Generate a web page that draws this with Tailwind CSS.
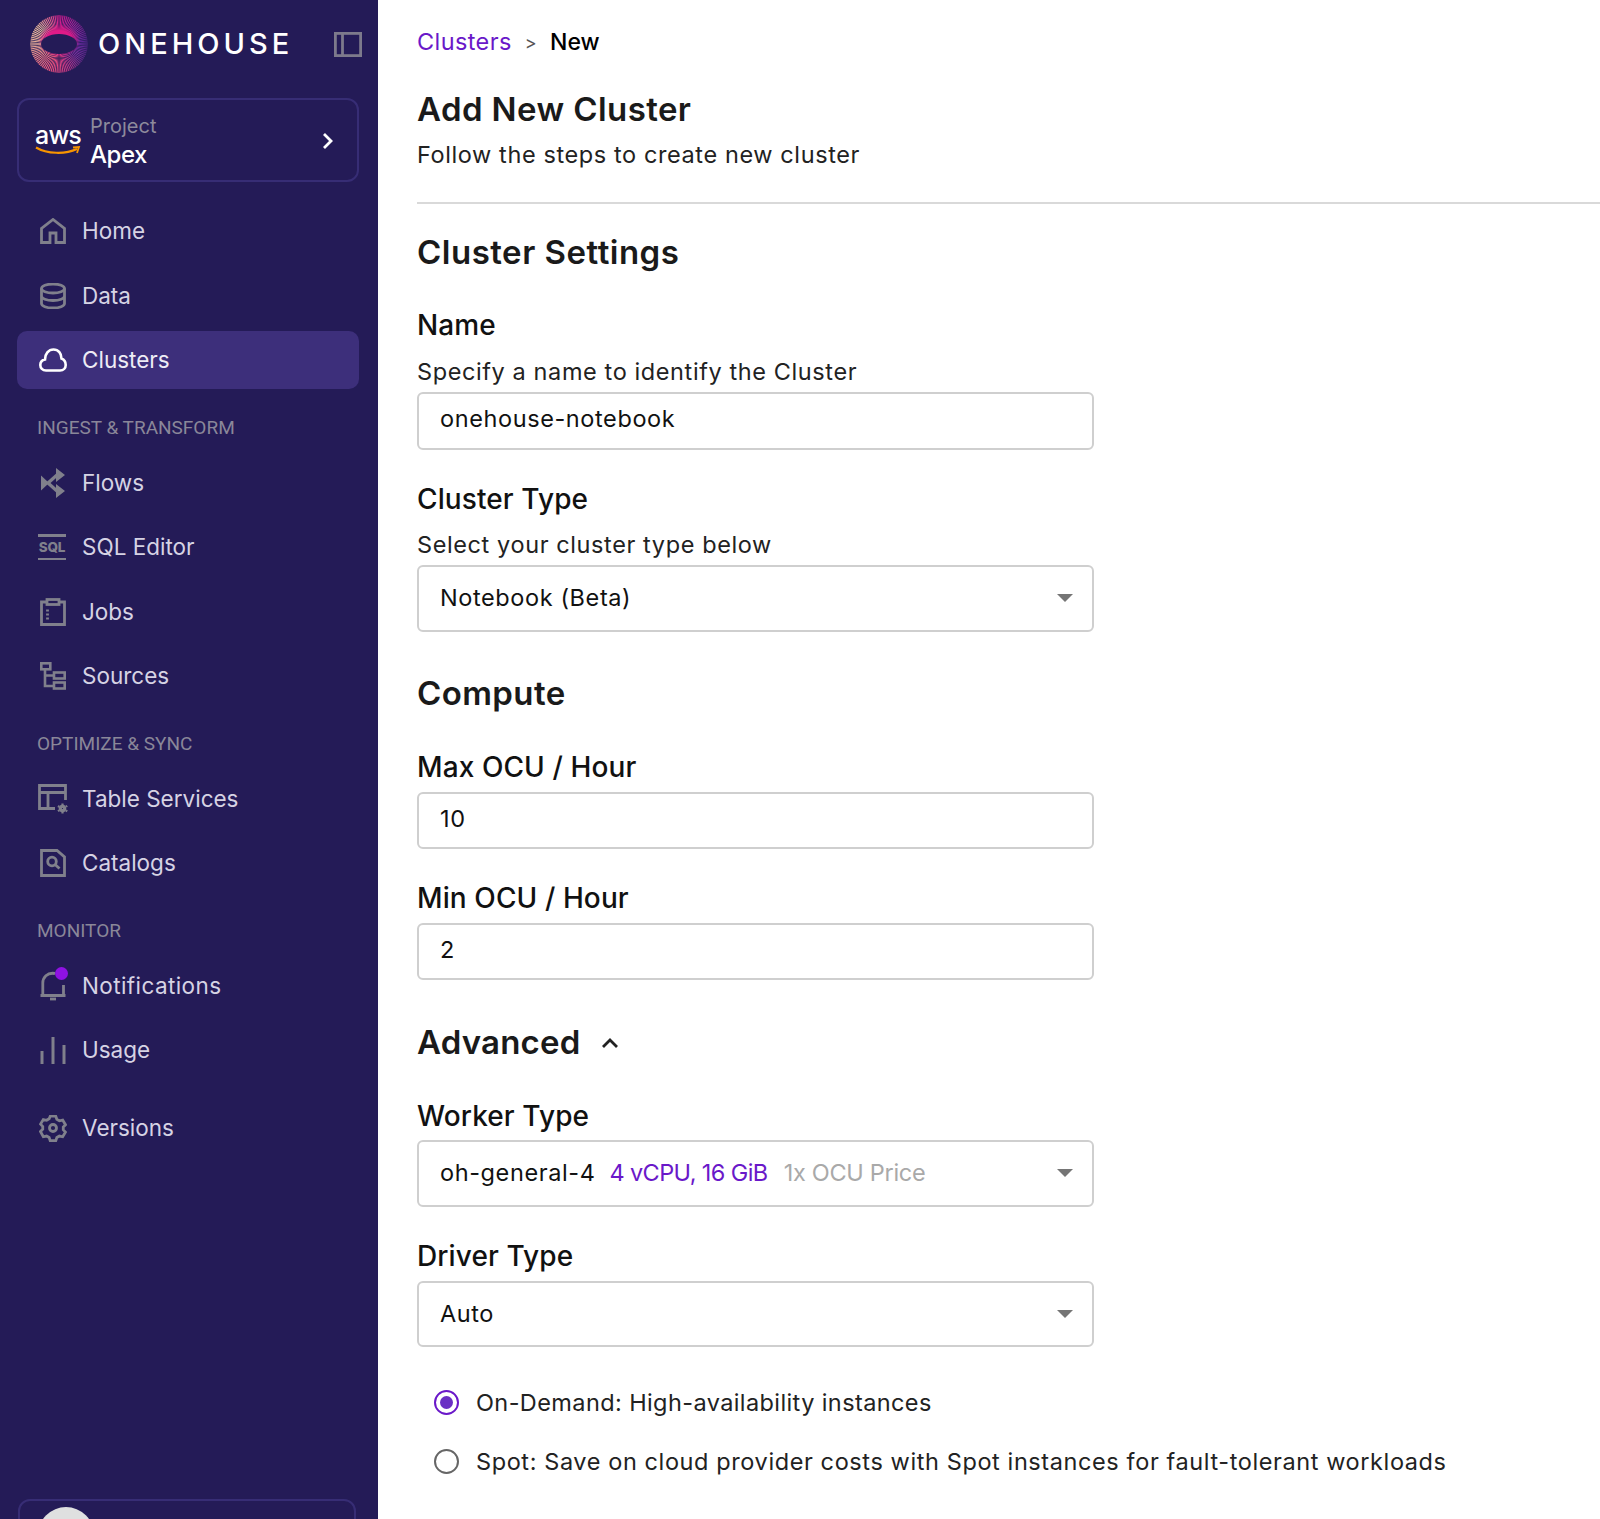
<!DOCTYPE html>
<html>
<head>
<meta charset="utf-8">
<script src="https://cdn.jsdelivr.net/npm/@tailwindcss/browser@4"></script>
</head>
<body class="bg-white font-['Inter',sans-serif] overflow-hidden">
<div class="flex h-[1519px] w-[1600px] overflow-hidden">
  <aside class="relative w-[378px] shrink-0 bg-[#241b57] pl-[17px] pr-[19px] text-[22.500px] text-[#d6d3e4]">
    <div class="flex h-[88px] items-center">
      <div class="relative ml-[13px] size-[58px] shrink-0">
        <div class="absolute inset-0 rounded-full bg-[conic-gradient(#d81b8f_0deg,#a4259f_40deg,#6a2ba6_85deg,#7a2f9c_125deg,#d33a86_165deg,#f2557f_200deg,#ef7d86_235deg,#ecb09a_270deg,#eebf9e_310deg,#e0608f_340deg,#d81b8f_360deg)] [mask-image:repeating-conic-gradient(#000_0deg,#0003_2deg,#000_4deg)]"></div>
        <div class="absolute inset-0 rounded-full bg-[radial-gradient(circle_at_36%_50%,#241b5700_62%,#241b57b0_88%)]"></div>
        <div class="absolute left-[8px] top-[9px] h-[33px] w-[42px] rounded-full bg-[radial-gradient(closest-side,#e01a88_60%,#e01a8800_100%)]"></div>
        <div class="absolute left-[11px] top-[19px] h-[20px] w-[36px] rounded-[50%] bg-[#241b57]"></div>
      </div>
      <span class="ml-[10px] text-[29px] font-medium tracking-[4px] text-white">ONEHOUSE</span>
      <svg class="ml-auto mr-[-3px] shrink-0" width="28" height="25" viewBox="0 0 28 25" fill="none" stroke="#7d7a8c" stroke-width="2.800"><rect x="1.400" y="1.400" width="25.200" height="22.200"/><path d="M8.500 1v23"/></svg>
    </div>
    <div class="mt-[10px] flex h-[84px] items-center rounded-[12px] border-2 border-[#372d75] pl-[16px] pr-[23px]">
      <div class="flex w-[46px] shrink-0 flex-col items-center">
        <span class="text-[25px] font-medium leading-[22px] tracking-[-0.03em] text-white">aws</span>
        <svg width="46" height="10" viewBox="0 0 46 10" fill="none"><path d="M1 1.500C12 8 30 8.500 42 3" stroke="#f79400" stroke-width="2.200"/><path d="M38 1.500L44 1 42 7" stroke="#f79400" stroke-width="1.800"/></svg>
      </div>
      <div class="ml-[9px] flex flex-col pt-[2px]">
        <span class="text-[20px] leading-[28px] text-[#8d8a9c]">Project</span>
        <span class="text-[24px] font-medium leading-[30px] tracking-[-0.02em] text-white">Apex</span>
      </div>
      <svg class="ml-auto mt-[2px]" width="12" height="18" viewBox="0 0 12 18" fill="none" stroke="#fff" stroke-width="2.800"><path d="M2 2l7 7-7 7"/></svg>
    </div>

    <nav class="mt-[17px]">
      <div class="flex h-[64.500px] items-center pl-[23px]">
        <svg class="shrink-0" width="26" height="26" viewBox="0 0 26 26" fill="none" stroke="#80808c" stroke-width="2.800"><path d="M1.500 24.500V10.500L13 1.500 24.500 10.500V24.500H16V15H10V24.500Z"/></svg>
        <span class="ml-[16px]">Home</span>
      </div>
      <div class="flex h-[64.500px] items-center pl-[23px]">
        <svg class="shrink-0" width="26" height="26" viewBox="0 0 26 26" fill="none" stroke="#80808c" stroke-width="2.800"><ellipse cx="13" cy="5.500" rx="11.500" ry="4.500"/><path d="M1.500 5.500v15c0 2.500 5 4.500 11.500 4.500s11.500-2 11.500-4.500v-15M1.500 13c0 2.500 5 4.500 11.500 4.500S24.500 15.500 24.500 13"/></svg>
        <span class="ml-[16px]">Data</span>
      </div>
      <div class="mt-[3px] flex h-[58px] items-center rounded-[10px] bg-[#3d2f7b] pl-[22px] text-[#eeecf5]">
        <svg class="shrink-0" width="28" height="24" viewBox="0 0 28 24" fill="none" stroke="#fff" stroke-width="2.600"><path d="M7 22.500C3.500 22.500 1.300 20 1.300 17 1.300 14 3.500 12 6 11.500 6 6 9.500 1.500 14.500 1.500 19.500 1.500 22.500 5.500 22.500 10.500 25 11.500 26.700 14 26.700 17 26.700 20 24.500 22.500 21 22.500Z"/></svg>
        <span class="ml-[15px]">Clusters</span>
      </div>

      <div class="mt-[22.500px] flex h-[33px] items-center pl-[20px] font-['Roboto',sans-serif] text-[19px] text-[#8a8799]">INGEST &amp; TRANSFORM</div>

      <div class="mt-[6px]">
        <div class="flex h-[64.500px] items-center pl-[23px]">
          <svg class="shrink-0" width="26" height="30" viewBox="0 0 26 30" fill="#80808c"><path d="M1 7.500l8 7.500-8 7.500z"/><path d="M8 15l9-8" stroke="#80808c" stroke-width="3.200"/><path d="M8 15l9 8" stroke="#80808c" stroke-width="3.200"/><path d="M16 0v14l9-7zM16 16v14l9-7z"/></svg>
          <span class="ml-[16px]">Flows</span>
        </div>
        <div class="flex h-[64.500px] items-center pl-[21px]">
          <div class="flex h-[26px] w-[28px] shrink-0 flex-col justify-between">
            <div class="h-[2.500px] bg-[#80808c]"></div>
            <div class="text-center text-[13.500px] font-extrabold leading-[14px] tracking-[-0.02em] text-[#80808c]">SQL</div>
            <div class="h-[2.500px] bg-[#80808c]"></div>
          </div>
          <span class="ml-[16px]">SQL Editor</span>
        </div>
        <div class="flex h-[64.500px] items-center pl-[23px]">
          <svg class="shrink-0" width="26" height="28" viewBox="0 0 26 28" fill="none" stroke="#80808c" stroke-width="2.800"><path d="M7 4H1.500V26.500H24.500V4H19"/><rect x="7" y="1.500" width="12" height="5"/><path d="M7.500 11.500v2M7.500 15.500v2M7.500 19.500v2"/></svg>
          <span class="ml-[16px]">Jobs</span>
        </div>
        <div class="flex h-[64.500px] items-center pl-[23px]">
          <svg class="shrink-0" width="26" height="28" viewBox="0 0 26 28" fill="none" stroke="#80808c" stroke-width="2.600"><rect x="1.300" y="1.300" width="9" height="6"/><rect x="14" y="10.500" width="10.700" height="6"/><rect x="14" y="20.500" width="10.700" height="6"/><path d="M5 7v17h9M5 13.500h9"/></svg>
          <span class="ml-[16px]">Sources</span>
        </div>
      </div>

      <div class="mt-[18px] flex h-[33px] items-center pl-[20px] pt-[2px] font-['Roboto',sans-serif] text-[19px] text-[#8a8799]">OPTIMIZE &amp; SYNC</div>

      <div class="mt-[7px]">
        <div class="flex h-[64.500px] items-center pl-[21px]">
          <svg class="shrink-0" width="30" height="30" viewBox="0 0 30 30" fill="none" stroke="#80808c" stroke-width="2.800"><path d="M17 24.500H1.500V1.500H27.500V16M1.500 8.500H27.500M10 8.500V24.500"/><circle cx="24.500" cy="24.500" r="2.200" stroke-width="3.200"/><path d="M24.500 19.500v1.500M24.500 28v1.500M20 22l1.200.8M28 26.500l1.200.8M20 27.200l1.200-.8M28 22.600l1.200-.8" stroke-width="2.200"/></svg>
          <span class="ml-[14px]">Table Services</span>
        </div>
        <div class="flex h-[64.500px] items-center pl-[23px]">
          <svg class="shrink-0" width="26" height="28" viewBox="0 0 26 28" fill="none" stroke="#80808c" stroke-width="2.800"><path d="M1.500 1.500H17L24.500 8V26.500H1.500Z"/><circle cx="12" cy="12.500" r="4.300"/><path d="M15 15.500l4.500 4"/></svg>
          <span class="ml-[16px]">Catalogs</span>
        </div>
      </div>

      <div class="mt-[18px] flex h-[33px] items-center pl-[20px] pt-[2px] font-['Roboto',sans-serif] text-[19px] text-[#8a8799]">MONITOR</div>

      <div class="mt-[7px]">
        <div class="relative flex h-[64.500px] items-center pl-[23px]">
          <svg class="shrink-0" width="26" height="30" viewBox="0 0 26 30" fill="none" stroke="#80808c" stroke-width="2.800"><path d="M15 2.500C7 1 2.800 7 2.800 12V24.500H23.500V14M0.500 24.500H25.500"/><path d="M10 28h6" stroke-width="2.800"/></svg>
          <span class="absolute left-[38px] top-[13px] size-[13px] rounded-full bg-[#8f12e3]"></span>
          <span class="ml-[16px] tracking-[0.4px]">Notifications</span>
        </div>
        <div class="flex h-[64.500px] items-center pl-[23px]">
          <svg class="shrink-0" width="26" height="28" viewBox="0 0 26 28" fill="#80808c"><rect x="0.500" y="15" width="3" height="13"/><rect x="11.500" y="1" width="3" height="27"/><rect x="22.500" y="9" width="3" height="19"/></svg>
          <span class="ml-[16px]">Usage</span>
        </div>
        <div class="mt-[13px] flex h-[64.500px] items-center pl-[22px]">
          <svg class="shrink-0" width="28" height="28" viewBox="0 0 24 24" fill="none" stroke="#80808c" stroke-width="2.400"><circle cx="12" cy="12" r="3"/><path d="M9.600 2.500h4.800l.9 2.700 2.200 1.300 2.800-.6 2.400 4.100-1.900 2 0 2.500 1.900 2-2.400 4.100-2.800-.6-2.200 1.300-.9 2.700H9.600l-.9-2.700-2.200-1.300-2.800.6L1.300 16l1.900-2V11.500L1.300 9.500l2.400-4.100 2.800.6 2.200-1.300z" transform="translate(0 -.5) scale(1 .97)"/></svg>
          <span class="ml-[15px]">Versions</span>
        </div>
      </div>
    </nav>

    <div class="absolute bottom-[-30px] left-[18px] h-[50px] w-[338px] rounded-t-[12px] border-2 border-[#372d75]">
      <div class="ml-[18px] mt-[6px] size-[56px] rounded-full bg-[#dfe0e0]"></div>
    </div>
  </aside>

  <main class="min-w-0 flex-1 pl-[39px] text-[#111] tracking-[0.6px]">
    <div class="flex h-[84px] items-center text-[23.500px] tracking-[0.4px]">
      <span class="text-[#6a18c9]">Clusters</span>
      <span class="mx-[13px] text-[18px] text-[#555]">&gt;</span>
      <span class="text-[23px] font-medium tracking-normal text-black">New</span>
    </div>
    <h1 class="flex h-[50px] items-center pt-[2px] text-[33px] font-semibold tracking-[0.4px] text-[#1a1a1a]">Add New Cluster</h1>
    <p class="mt-[1px] flex h-[40px] items-center text-[23.500px] text-[#222]">Follow the steps to create new cluster</p>
    <div class="mt-[27px] h-[1.500px] bg-[#d9d9d9]"></div>

    <h2 class="mt-[25px] flex h-[48px] items-center text-[33px] font-semibold tracking-[0.5px] text-[#1a1a1a]">Cluster Settings</h2>
    <div class="mt-[28px] flex h-[40px] items-center text-[28px] font-medium tracking-[0.1px]">Name</div>
    <div class="mt-[7px] flex h-[40px] items-center pt-[1px] text-[23.500px] text-[#222]">Specify a name to identify the Cluster</div>
    <div class="flex h-[58px] w-[677px] items-center rounded-[6px] border-2 border-[#cfcfcf] px-[21px] pb-[3px] text-[23.500px]">onehouse-notebook</div>

    <div class="mt-[28px] flex h-[40px] items-center pt-[2px] text-[28px] font-medium tracking-[0.1px]">Cluster Type</div>
    <div class="mt-[7px] flex h-[40px] items-center text-[23.500px] text-[#222]">Select your cluster type below</div>
    <div class="flex h-[67px] w-[677px] items-center justify-between rounded-[6px] border-2 border-[#cfcfcf] pl-[21px] pr-[19px] text-[23.500px]">
      <span>Notebook (Beta)</span>
      <span class="h-0 w-0 border-x-[8px] border-t-[8px] border-x-transparent border-t-[#757575]"></span>
    </div>

    <h2 class="mt-[37px] flex h-[48px] items-center pt-[3px] text-[33px] font-semibold tracking-[0.4px] text-[#1a1a1a]">Compute</h2>
    <div class="mt-[29px] flex h-[40px] items-center pt-[3px] text-[28px] font-medium tracking-[0.1px]">Max OCU / Hour</div>
    <div class="mt-[6px] flex h-[57px] w-[677px] items-center rounded-[6px] border-2 border-[#cfcfcf] px-[21px] pb-[3px] text-[23.500px]">10</div>
    <div class="mt-[28px] flex h-[40px] items-center pt-[3px] text-[28px] font-medium tracking-[0.1px]">Min OCU / Hour</div>
    <div class="mt-[6px] flex h-[57px] w-[677px] items-center rounded-[6px] border-2 border-[#cfcfcf] px-[21px] pb-[3px] text-[23.500px]">2</div>

    <div class="mt-[38px] flex h-[48px] items-center pt-[2px]">
      <h2 class="text-[33px] font-semibold tracking-[0.2px] text-[#1a1a1a]">Advanced</h2>
      <svg class="ml-[20px]" width="18" height="12" viewBox="0 0 18 12" fill="none" stroke="#222" stroke-width="2.800"><path d="M2 10l7-7 7 7"/></svg>
    </div>
    <div class="mt-[29px] flex h-[40px] items-center pt-[3px] text-[28px] font-medium tracking-[0.1px]">Worker Type</div>
    <div class="mt-[5px] flex h-[67px] w-[677px] items-center rounded-[6px] border-2 border-[#cfcfcf] pl-[21px] pr-[19px] text-[23.500px]">
      <span>oh-general-4</span>
      <span class="ml-[14px] tracking-[-0.6px] text-[#6a18c9]">4 vCPU, 16 GiB</span>
      <span class="ml-[16px] tracking-[-0.3px] text-[#a9a9a9]">1x OCU Price</span>
      <span class="ml-auto h-0 w-0 border-x-[8px] border-t-[8px] border-x-transparent border-t-[#757575]"></span>
    </div>
    <div class="mt-[29px] flex h-[40px] items-center pt-[1px] text-[28px] font-medium tracking-[0.1px]">Driver Type</div>
    <div class="mt-[5px] flex h-[66px] w-[677px] items-center justify-between rounded-[6px] border-2 border-[#cfcfcf] pl-[21px] pr-[19px] text-[23.500px]">
      <span>Auto</span>
      <span class="h-0 w-0 border-x-[8px] border-t-[8px] border-x-transparent border-t-[#757575]"></span>
    </div>

    <div class="mt-[36px] flex h-[40px] items-center pl-[17px] text-[23.500px] tracking-[0.4px] text-[#222]">
      <span class="flex size-[25px] items-center justify-center rounded-full border-[2.500px] border-[#6a18c9]"><span class="size-[13px] rounded-full bg-[#6a2fc4]"></span></span>
      <span class="ml-[17px]">On-Demand: High-availability instances</span>
    </div>
    <div class="mt-[19px] flex h-[40px] items-center pl-[17px] text-[23.500px] text-[#222]">
      <span class="size-[25px] rounded-full border-[2.500px] border-[#666]"></span>
      <span class="ml-[17px]">Spot: Save on cloud provider costs with Spot instances for fault-tolerant workloads</span>
    </div>
  </main>
</div>
</body>
</html>
